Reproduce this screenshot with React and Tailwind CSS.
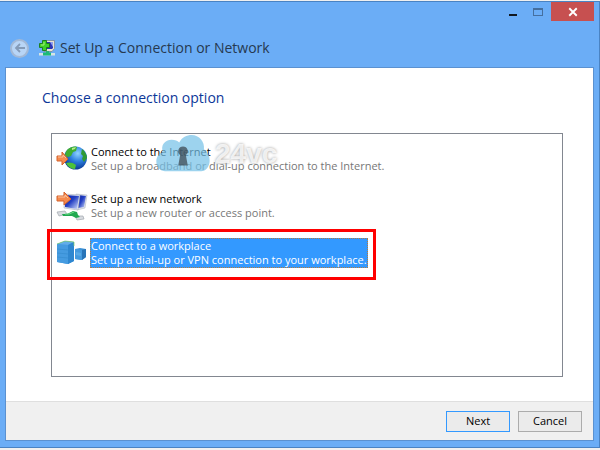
import { useState } from 'react';

function GlobeIcon() {
  return (
    <svg viewBox="0 0 32 32" className="w-8 h-8" aria-hidden="true">
      <defs>
        <radialGradient id="sea" cx="0.6" cy="0.3" r="0.7">
          <stop offset="0" stopColor="#8fd4ff" />
          <stop offset="0.5" stopColor="#2d7fe0" />
          <stop offset="1" stopColor="#0b3a94" />
        </radialGradient>
      </defs>
      <circle cx="19.5" cy="16" r="11.500" fill="url(#sea)" />
      <path d="M12 7c3-2 6-3 9-2l-1 4-3 1-2 4-3 1-3-1c0-3 1-5 3-7z" fill="#3fae32" />
      <path d="M10 21c2-1 7-1 10 2l-1 4c-4 0-7-2-9-6z" fill="#4cc23a" />
      <path d="M26 7c3 2 5 6 5 9l-3 4-2-3 1-3-2-2z" fill="#2f9b35" />
      <path d="M16 6l4-1-1 2-3 1z" fill="#b5ec8c" />
      <path d="M1 14h5v-4l6 7-6 6v-4H1z" fill="#f58a4e" stroke="#d5622c" />
      <path d="M2 15h5v-2l3 3" fill="none" stroke="#fbc09a" />
    </svg>
  );
}

function NewNetworkIcon() {
  return (
    <svg viewBox="0 0 32 32" className="w-8 h-8" aria-hidden="true">
      <defs>
        <linearGradient id="screen" x1="0" y1="0" x2="1" y2="1">
          <stop offset="0" stopColor="#0a1e9c" />
          <stop offset="0.45" stopColor="#2440c4" />
          <stop offset="1" stopColor="#dbe6ff" />
        </linearGradient>
      </defs>
      <path d="M20 5l11 1-2 13-8 2z" fill="#dfe3ea" stroke="#a8afbb" strokeWidth="0.500" />
      <path d="M22 6l8 1-2 11-6 1z" fill="url(#screen)" />
      <path d="M8 5l16 1-2 15-14-2z" fill="#e4e8ef" stroke="#9da6b5" strokeWidth="0.500" />
      <path d="M9 6l14 1-2 13-12-2z" fill="url(#screen)" />
      <path d="M1 23l8-1 2 3-8 2zM19 27l8 0 1 3-7 1z" fill="#d8dbe0" stroke="#a1a6ae" strokeWidth="0.700" />
      <path d="M6 25l5 0 6-3 4 1 1 3 2 2-4 1-4-2-5 0-4 0z" fill="#21a850" />
      <path d="M9 25l4 0 5-2" stroke="#71dc8b" fill="none" />
      <path d="M1 7h7V3l7 7-7 6v-4H1z" fill="#f58a4e" stroke="#d5622c" />
      <path d="M2 8h7V6l3 3" fill="none" stroke="#fbc09a" />
    </svg>
  );
}

function WorkplaceIcon() {
  return (
    <svg viewBox="0 0 32 32" className="w-8 h-8" aria-hidden="true">
      <path d="M1 8l8-3 9 1v19l-6 3-11-2z" fill="#3a93dc" />
      <path d="M1 8l11 1v19l-11-2z" fill="#459be0" />
      <path d="M1 8l8-3 9 1-6 3z" fill="#62adea" />
      <path d="M12 9l6-3v19l-6 3z" fill="#2f87d0" />
      <path d="M1 13l11 1 6-3M1 17l11 1 6-3M1 21l11 1 6-3" stroke="#328acd" strokeWidth="0.600" fill="none" />
      <path d="M1 8l8-3 9 1v4" stroke="#7ccd63" strokeWidth="0.700" fill="none" />
      <path d="M19 13l5-1 6 1v8l-4 3-7-1z" fill="#3b91d6" />
      <path d="M19 13l7 1v10l-7-1z" fill="#459ade" />
      <path d="M26 14l4-1v8l-4 3z" fill="#2874b8" />
      <path d="M20 16l5 1v3l-5-1z" fill="#5aaae6" />
    </svg>
  );
}

function WizardIcon() {
  return (
    <svg viewBox="0 0 16 16" className="w-4 h-4" aria-hidden="true">
      <path d="M5 .5h10.500v8L13 11.500H5z" fill="#e7e4d4" stroke="#767f93" strokeWidth="0.700" />
      <path d="M7 2h7v6l-1 1H7z" fill="#2b35b4" />
      <path d="M11 2h3v5z" fill="#8e9df0" />
      <path d="M7 11h3v2H7z" fill="#24b578" />
      <path d="M0 13h16v2.500H0z" fill="#d6e4e2" />
      <path d="M4 12.500h8v3H4z" fill="#1dba77" />
      <path d="M3.500.5h4v3h3v4h-3v3h-4v-3h-3v-4h3z" fill="#3fd028" stroke="#167b16" strokeWidth="0.900" />
      <path d="M5 2v3H2" stroke="#a5f07c" fill="none" />
    </svg>
  );
}

function Watermark() {
  return (
    <div className="absolute left-[103px] top-0 flex items-start pointer-events-none" aria-hidden="true">
      <svg viewBox="0 0 58 42" className="w-14 h-10">
        <path
          d="M10 39C4 39 1 34 1 29c0-5 3-9 7-10C5 12 10 6 17 6c4 0 6 1 8 3C28 3 33 1 38 1c8 0 14 7 13 15 4 3 6 7 6 12 0 6-4 11-9 11z"
          fill="#74c0e7"
          fillOpacity="0.700"
        />
        <path d="M29 13a5 5 0 0 1 3 9l2 11H24l2-11a5 5 0 0 1 3-9z" fill="#38424a" fillOpacity="0.700" />
      </svg>
      <span className="ml-1 text-[28px] leading-10 font-bold text-white/80 [text-shadow:0_0_3px_#999999] font-['Liberation_Sans',sans-serif]">
        24vc
      </span>
    </div>
  );
}

const options = [
  {
    id: 'internet',
    title: 'Connect to the Internet',
    text: 'Set up a broadband or dial-up connection to the Internet.',
    Icon: GlobeIcon,
  },
  {
    id: 'network',
    title: 'Set up a new network',
    text: 'Set up a new router or access point.',
    Icon: NewNetworkIcon,
  },
  {
    id: 'workplace',
    title: 'Connect to a workplace',
    text: 'Set up a dial-up or VPN connection to your workplace.',
    Icon: WorkplaceIcon,
  },
];

function TitleBar() {
  return (
    <header>
      <div className="flex justify-end items-start h-9 pr-[5px]">
        <button aria-label="Minimize" className="w-6 h-5 flex justify-center items-end pb-[6px]">
          <span className="w-2 h-[2px] bg-[#111820]" />
        </button>
        <button aria-label="Maximize" disabled className="w-[26px] h-5 flex justify-center items-center">
          <span className="w-[10px] h-2 border border-t-2 border-[#456f9f]" />
        </button>
        <button aria-label="Close" className="w-[43px] h-[19px] flex justify-center items-center bg-[#c75050]">
          <svg viewBox="0 0 8 8" className="w-[10px] h-[10px]">
            <path d="M1 1l6 6M7 1l-6 6" stroke="#fff" strokeWidth="1.500" />
          </svg>
        </button>
      </div>
      <div className="flex items-center h-[29px] pl-[10px] pb-[9px]">
        <button
          aria-label="Back"
          disabled
          className="w-[19px] h-[19px] rounded-full border-2 border-[#a3b9d6] bg-[#b8d5f6] flex justify-center items-center"
        >
          <svg viewBox="0 0 12 12" className="w-3 h-3">
            <path d="M11 6H2M6 2L2 6l4 4" fill="none" stroke="#849bb8" strokeWidth="1.800" />
          </svg>
        </button>
        <span className="ml-[10px]">
          <WizardIcon />
        </span>
        <h1 className="ml-[5px] text-[14px] leading-5 text-[#263950]">Set Up a Connection or Network</h1>
      </div>
    </header>
  );
}

export default function App() {
  const [selected, setSelected] = useState('workplace');

  return (
    <div className="min-h-screen flex flex-col bg-[#f0f0f0] pt-px pb-[2px] font-['Open_Sans','Noto_Sans',sans-serif]">
      <div className="flex-1 flex flex-col bg-[#6badf6] border-t border-b border-r border-[#4a83c3] pb-[6px]">
        <TitleBar />
        <div className="flex-1 flex flex-col ml-[5px] mr-[5px] border border-[#5b91d0] bg-white">
          <main className="flex-1 flex flex-col pl-[45px] pr-[30px] pb-6">
            <h2 className="-ml-[9px] pt-5 text-[14px] leading-5 text-[#0c3799]">Choose a connection option</h2>
            <ul
              role="listbox"
              aria-label="Choose a connection option"
              className="relative mt-[25px] flex-1 border border-[#828790] pt-2 pl-1"
            >
              {options.map(({ id, title, text, Icon }) => (
                <li key={id} role="option" aria-selected={selected === id} className="relative h-[47px]">
                  <button onClick={() => setSelected(id)} className="flex items-start text-left">
                    <Icon />
                    <span
                      className={
                        selected === id
                          ? 'block ml-[2px] mt-[2px] text-[11px] leading-[14px] text-white bg-[#3399ff] border border-dotted border-[#b77a3c]'
                          : 'block ml-[2px] mt-[2px] text-[11px] leading-[14px] text-[#777777] border border-transparent'
                      }
                    >
                      <span className={selected === id ? 'block' : 'block text-black'}>{title}</span>
                      <span className="block">{text}</span>
                    </span>
                  </button>
                  {id === 'workplace' && (
                    <span className="absolute -left-[9px] -top-[7px] w-[329px] h-[51px] border-3 border-[#ff0000] pointer-events-none" />
                  )}
                </li>
              ))}
              <Watermark />
            </ul>
          </main>
          <footer className="flex justify-end gap-2 border-t border-[#dfdfdf] bg-[#f0f0f0] pt-[9px] pb-2 pr-[11px]">
            <button className="w-16 h-[21px] pb-[2px] border border-[#3399ff] bg-[#ebebeb] text-[11px] leading-4 text-black">
              Next
            </button>
            <button className="w-16 h-[21px] pb-[2px] border border-[#acacac] bg-[#ebebeb] text-[11px] leading-4 text-black">
              Cancel
            </button>
          </footer>
        </div>
      </div>
    </div>
  );
}
